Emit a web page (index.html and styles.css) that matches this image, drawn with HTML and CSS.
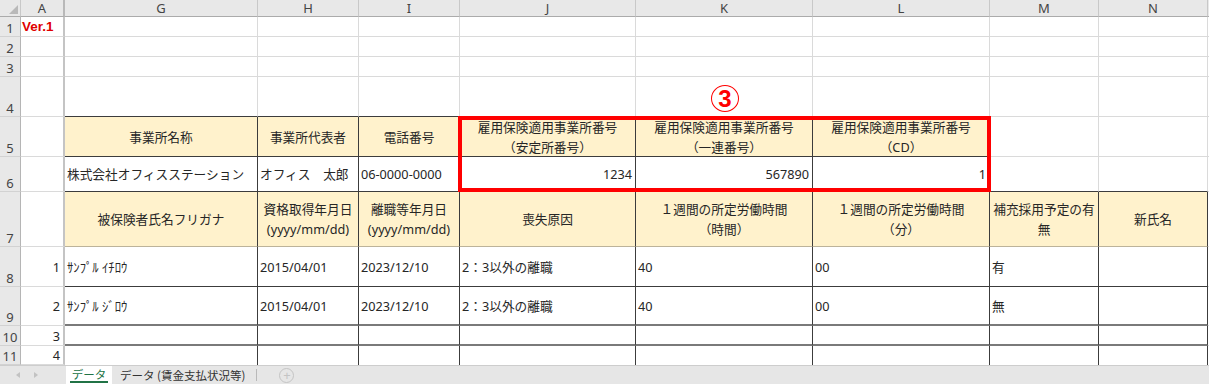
FILE: index.html
```html
<!DOCTYPE html>
<html lang="ja">
<head>
<meta charset="utf-8">
<title>データ</title>
<link rel="stylesheet" href="styles.css">
</head>
<body>
<div class="sheet">
  <!-- column headers -->
  <div class="c ch corner"><span class="tri"></span></div>
  <div class="c ch a">A</div>
  <div class="c ch">G</div>
  <div class="c ch">H</div>
  <div class="c ch">I</div>
  <div class="c ch">J</div>
  <div class="c ch">K</div>
  <div class="c ch">L</div>
  <div class="c ch">M</div>
  <div class="c ch">N</div>
  <div class="c ch last"></div>

  <!-- row 1 -->
  <div class="c rh">1</div>
  <div class="c a ver">Ver.1</div>
  <div class="c"></div><div class="c"></div><div class="c"></div><div class="c"></div>
  <div class="c"></div><div class="c"></div><div class="c"></div><div class="c"></div>
  <div class="c last"></div>

  <!-- row 2 -->
  <div class="c rh">2</div>
  <div class="c a"></div>
  <div class="c"></div><div class="c"></div><div class="c"></div><div class="c"></div>
  <div class="c"></div><div class="c"></div><div class="c"></div><div class="c"></div>
  <div class="c last"></div>

  <!-- row 3 -->
  <div class="c rh">3</div>
  <div class="c a"></div>
  <div class="c"></div><div class="c"></div><div class="c"></div><div class="c"></div>
  <div class="c"></div><div class="c"></div><div class="c"></div><div class="c"></div>
  <div class="c last"></div>

  <!-- row 4 -->
  <div class="c rh">4</div>
  <div class="c a"></div>
  <div class="c bdk"></div><div class="c bdk"></div><div class="c bdk"></div><div class="c bdk"></div>
  <div class="c bdk"></div><div class="c bdk"></div><div class="c"></div><div class="c"></div>
  <div class="c last"></div>

  <!-- row 5 -->
  <div class="c rh">5</div>
  <div class="c a"></div>
  <div class="c hd tb">事業所名称</div>
  <div class="c hd tb">事業所代表者</div>
  <div class="c hd tb">電話番号</div>
  <div class="c hd tb">雇用保険適用事業所番号<br>（安定所番号）</div>
  <div class="c hd tb">雇用保険適用事業所番号<br>（一連番号）</div>
  <div class="c hd tb">雇用保険適用事業所番号<br>（CD）</div>
  <div class="c"></div><div class="c"></div>
  <div class="c last"></div>

  <!-- row 6 -->
  <div class="c rh">6</div>
  <div class="c a"></div>
  <div class="c tb">株式会社オフィスステーション</div>
  <div class="c tb">オフィス　太郎</div>
  <div class="c tb">06-0000-0000</div>
  <div class="c tb r">1234</div>
  <div class="c tb r">567890</div>
  <div class="c tb r">1</div>
  <div class="c bdk"></div><div class="c bdk"></div>
  <div class="c last"></div>

  <!-- row 7 -->
  <div class="c rh">7</div>
  <div class="c a"></div>
  <div class="c hd tb hlb">被保険者氏名フリガナ</div>
  <div class="c hd tb hlb">資格取得年月日<br>(yyyy/mm/dd)</div>
  <div class="c hd tb hlb">離職等年月日<br>(yyyy/mm/dd)</div>
  <div class="c hd tb hlb">喪失原因</div>
  <div class="c hd tb hlb">１週間の所定労働時間<br>（時間）</div>
  <div class="c hd tb hlb">１週間の所定労働時間<br>（分）</div>
  <div class="c hd tb hlb">補充採用予定の有<br>無</div>
  <div class="c hd tb hlb">新氏名</div>
  <div class="c last"></div>

  <!-- row 8 -->
  <div class="c rh">8</div>
  <div class="c a r">1</div>
  <div class="c tb">ｻﾝﾌﾟﾙ ｲﾁﾛｳ</div>
  <div class="c tb">2015/04/01</div>
  <div class="c tb">2023/12/10</div>
  <div class="c tb">2：3以外の離職</div>
  <div class="c tb">40</div>
  <div class="c tb">00</div>
  <div class="c tb">有</div>
  <div class="c tb"></div>
  <div class="c last"></div>

  <!-- row 9 -->
  <div class="c rh">9</div>
  <div class="c a r">2</div>
  <div class="c tb b2">ｻﾝﾌﾟﾙ ｼﾞﾛｳ</div>
  <div class="c tb b2">2015/04/01</div>
  <div class="c tb b2">2023/12/10</div>
  <div class="c tb b2">2：3以外の離職</div>
  <div class="c tb b2">40</div>
  <div class="c tb b2">00</div>
  <div class="c tb b2">無</div>
  <div class="c tb b2"></div>
  <div class="c last"></div>

  <!-- row 10 -->
  <div class="c rh">10</div>
  <div class="c a r">3</div>
  <div class="c tb b2"></div><div class="c tb b2"></div><div class="c tb b2"></div><div class="c tb b2"></div>
  <div class="c tb b2"></div><div class="c tb b2"></div><div class="c tb b2"></div><div class="c tb b2"></div>
  <div class="c last"></div>

  <!-- row 11 -->
  <div class="c rh">11</div>
  <div class="c a r">4</div>
  <div class="c tb nb"></div><div class="c tb nb"></div><div class="c tb nb"></div><div class="c tb nb"></div>
  <div class="c tb nb"></div><div class="c tb nb"></div><div class="c tb nb"></div><div class="c tb nb"></div>
  <div class="c last nb"></div>

  <!-- overlays -->
  <div class="hl"></div>
  <div class="mark">3</div>
</div>

<div class="tabs">
  <div class="nav"><span class="al"></span><span class="ar"></span></div>
  <div class="tab on"><span class="t">データ</span></div>
  <div class="tab">データ (賃金支払状況等)</div>
  <span class="sep"></span>
  <span class="plus">+</span>
</div>
</body>
</html>
```

FILE: styles.css
```css
* { box-sizing: border-box; margin: 0; padding: 0; }
html, body { width: 1209px; height: 384px; overflow: hidden; background: #fff; }
body {
  font-family: "Noto Sans", "Noto Sans CJK JP", sans-serif;
  font-size: 12.7px;
  color: #262626;
}

.sheet {
  position: relative;
  display: grid;
  grid-template-columns: 21px 44px 193px 101px 101px 176px 177px 177px 109px 109px 1fr;
  grid-template-rows: 17px 20px 20px 20px 40px 40px 35px 55px 40px 39px 20px 19px;
}

.c {
  border-right: 1px solid #dadada;
  border-bottom: 1px solid #dadada;
  display: flex;
  align-items: center;
  padding: 0 2px;
  white-space: nowrap;
  overflow: hidden;
  line-height: 16px;
}
.last { border-right: none; }
.r { justify-content: flex-end; padding-right: 3px; }

/* headers */
.ch {
  background: #e8e8e8;
  color: #444;
  font-size: 13px;
  justify-content: center;
  border-right-color: #c8c8c8;
  border-bottom-color: #ababab;
}
.corner { justify-content: flex-end; align-items: flex-end; padding: 0 2px 2px 0; }
.tri {
  width: 0; height: 0;
  border-left: 9px solid transparent;
  border-bottom: 9px solid #b9b9b9;
}
.rh {
  background: #e8e8e8;
  color: #444;
  font-size: 13px;
  justify-content: center;
  align-items: flex-end;
  padding: 0;
  line-height: 16px;
  border-right-color: #b5b5b5;
  border-bottom-color: #d2d2d2;
}
.a { border-right: 2px solid #c4c4c4; }
.ch.a { border-right: 2px solid #b8b8b8; }
.ver {
  color: #e00000;
  font-family: "Liberation Sans", Arial, sans-serif;
  font-weight: bold;
  font-size: 13.5px;
  padding-left: 1px;
}

/* table */
.bdk { border-bottom-color: #3c3c3c; }
.tb { border-right-color: #3c3c3c; border-bottom-color: #3c3c3c; }
.hd {
  background: #fff2cc;
  justify-content: center;
  text-align: center;
  white-space: normal;
  line-height: 20px;
}
.hlb { border-bottom-color: #bcb39a; }
.b2 { border-bottom: 2px solid #7a7a7a; }
.nb { border-bottom: none; }

/* overlays */
.hl {
  position: absolute;
  left: 458px;
  top: 116px;
  width: 533px;
  height: 76px;
  border: 4px solid #ff0000;
}
.mark {
  position: absolute;
  left: 711px;
  top: 85px;
  width: 28px;
  height: 27px;
  border: 1.2px solid #ff0000;
  border-radius: 50%;
  color: #ff0000;
  font-family: "Liberation Sans", Arial, sans-serif;
  font-weight: bold;
  font-size: 24px;
  line-height: 1;
  display: flex;
  align-items: center;
  justify-content: center;
}

/* sheet tabs */
.tabs {
  display: flex;
  align-items: stretch;
  height: 19px;
  background: #e6e6e6;
  border-top: 1px solid #cdcdcd;
  font-family: "Noto Sans CJK JP", "Noto Sans", sans-serif;
  font-size: 11.5px;
  white-space: nowrap;
}
.nav {
  width: 66px;
  display: flex;
  align-items: center;
  gap: 14px;
  padding-left: 16px;
}
.al, .ar { width: 0; height: 0; border-top: 3px solid transparent; border-bottom: 3px solid transparent; }
.al { border-right: 4px solid #c2c2c2; }
.ar { border-left: 4px solid #c2c2c2; }
.tab {
  display: flex;
  align-items: center;
  padding: 0 8px;
  color: #333;
}
.tab.on {
  width: 46px;
  background: #fff;
  color: #217346;
  align-items: flex-end;
  justify-content: center;
  padding: 0;
}
.tab.on .t {
  display: block;
  line-height: 14px;
  padding: 0 2px;
  border-bottom: 2px solid #217346;
  margin-bottom: 1px;
}
.sep {
  align-self: center;
  width: 1px;
  height: 12px;
  background: #b9b9b9;
  margin-left: 3px;
}
.plus {
  align-self: center;
  width: 15px;
  height: 15px;
  margin-left: 22px;
  border: 1px solid #c4c4c4;
  border-radius: 50%;
  color: #c4c4c4;
  font-family: "Noto Sans", sans-serif;
  font-size: 13px;
  line-height: 12px;
  text-align: center;
}
```
